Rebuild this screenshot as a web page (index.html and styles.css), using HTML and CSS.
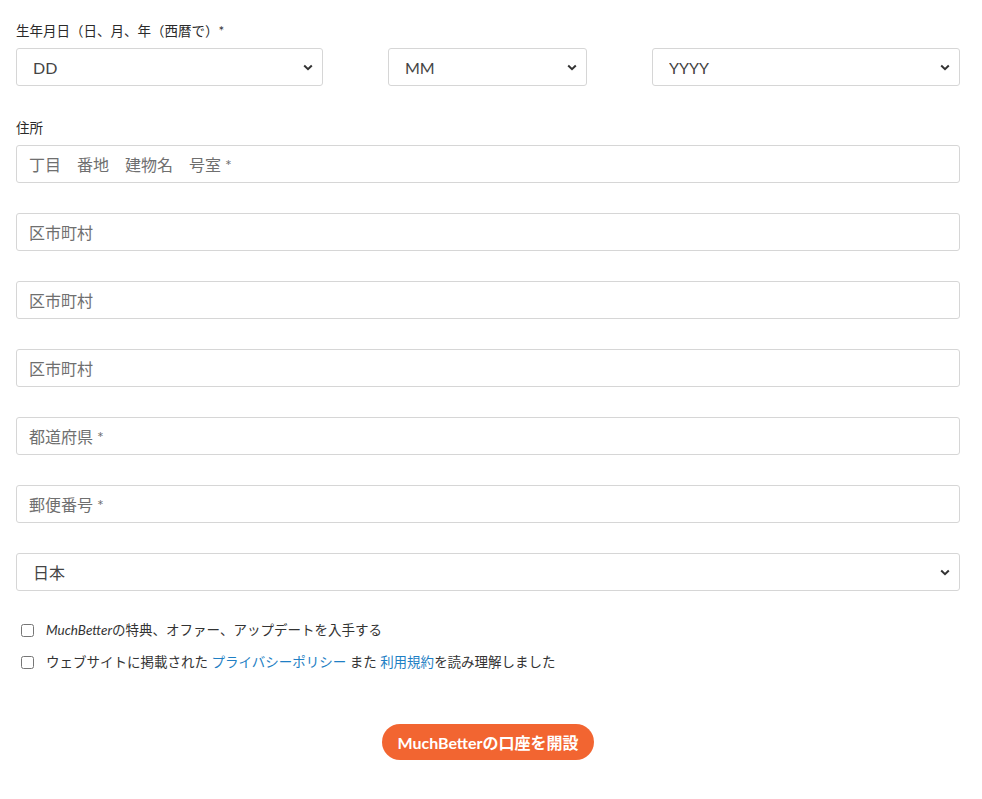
FILE: index.html
```html
<!DOCTYPE html>
<html lang="ja">
<head>
  <meta charset="UTF-8" />
  <meta name="viewport" content="width=device-width, initial-scale=1.0" />
  <title>MuchBetter 口座開設</title>
  <link rel="stylesheet" href="styles.css">
</head>
<body>
  <form class="signup">
    <div class="field field-dob">
      <label class="field-label">生年月日（日、月、年（西暦で）*</label>
      <div class="dob">
        <select><option>DD</option></select>
        <select><option>MM</option></select>
        <select><option>YYYY</option></select>
      </div>
    </div>

    <div class="field">
      <label class="field-label">住所</label>
      <input type="text" placeholder="丁目　番地　建物名　号室 *" />
    </div>
    <div class="field"><input type="text" placeholder="区市町村" /></div>
    <div class="field"><input type="text" placeholder="区市町村" /></div>
    <div class="field"><input type="text" placeholder="区市町村" /></div>
    <div class="field"><input type="text" placeholder="都道府県 *" /></div>
    <div class="field"><input type="text" placeholder="郵便番号 *" /></div>
    <div class="field"><select><option>日本</option></select></div>

    <div class="checks">
      <label class="check"><input type="checkbox" /><span><i>MuchBetter</i>の特典、オファー、アップデートを入手する</span></label>
      <label class="check"><input type="checkbox" /><span>ウェブサイトに掲載された <a href="#">プライバシーポリシー</a> また <a href="#">利用規約</a>を読み理解しました</span></label>
    </div>

    <div class="actions">
      <button type="button" class="submit">MuchBetterの口座を開設</button>
    </div>
  </form>
</body>
</html>
```

FILE: styles.css
```css
body {
  margin: 0;
  font-family: Lato, "Noto Sans CJK JP", sans-serif;
  background: #fff;
  color: #333;
}

.signup {
  width: 944px;
  padding: 23px 16px 0;
}

.field {
  margin-bottom: 30px;
}

.field-dob {
  margin-bottom: 34px;
}

.field-label {
  display: block;
  font-size: 13.5px;
  line-height: 17px;
  margin-bottom: 8px;
  color: #2a2a2a;
}

.dob {
  display: grid;
  grid-template-columns: 307px 199px 1fr;
  gap: 65px;
}

input[type="text"], select {
  display: block;
  width: 100%;
  box-sizing: border-box;
  height: 38px;
  padding: 0 12px;
  font-family: Lato, "Noto Sans CJK JP", sans-serif;
  font-size: 16px;
  color: #444;
  background: #fff;
  border: 1px solid #d6d6d6;
  border-radius: 3px;
  outline: none;
}

input[type="text"]::placeholder {
  color: #6f6f6f;
}

select {
  padding-left: 16px;
  appearance: none;
  -webkit-appearance: none;
  background-image: url("data:image/svg+xml;utf8,<svg xmlns='http://www.w3.org/2000/svg' width='10' height='7' viewBox='0 0 10 7'><path d='M1.2 1.5 L5 5.2 L8.8 1.5' fill='none' stroke='%23333' stroke-width='2'/></svg>");
  background-repeat: no-repeat;
  background-position: right 9px center;
}

.checks {
  display: flex;
  flex-direction: column;
  gap: 13px;
  margin-top: 3px;
  padding-left: 5px;
}

.check {
  display: flex;
  align-items: center;
  gap: 12px;
  font-size: 13.5px;
  line-height: 19px;
  color: #333;
}

.check input {
  margin: 0;
  width: 13px;
  height: 13px;
}

.check a {
  color: #1f7fc4;
  text-decoration: none;
}

.actions {
  display: flex;
  justify-content: center;
  padding-top: 52px;
}

.submit {
  height: 36px;
  padding: 0 15px;
  background: #f26531;
  color: #fff;
  border: none;
  border-radius: 18px;
  font-family: Lato, "Noto Sans CJK JP", sans-serif;
  font-weight: 700;
  font-size: 16px;
  cursor: pointer;
}
```
